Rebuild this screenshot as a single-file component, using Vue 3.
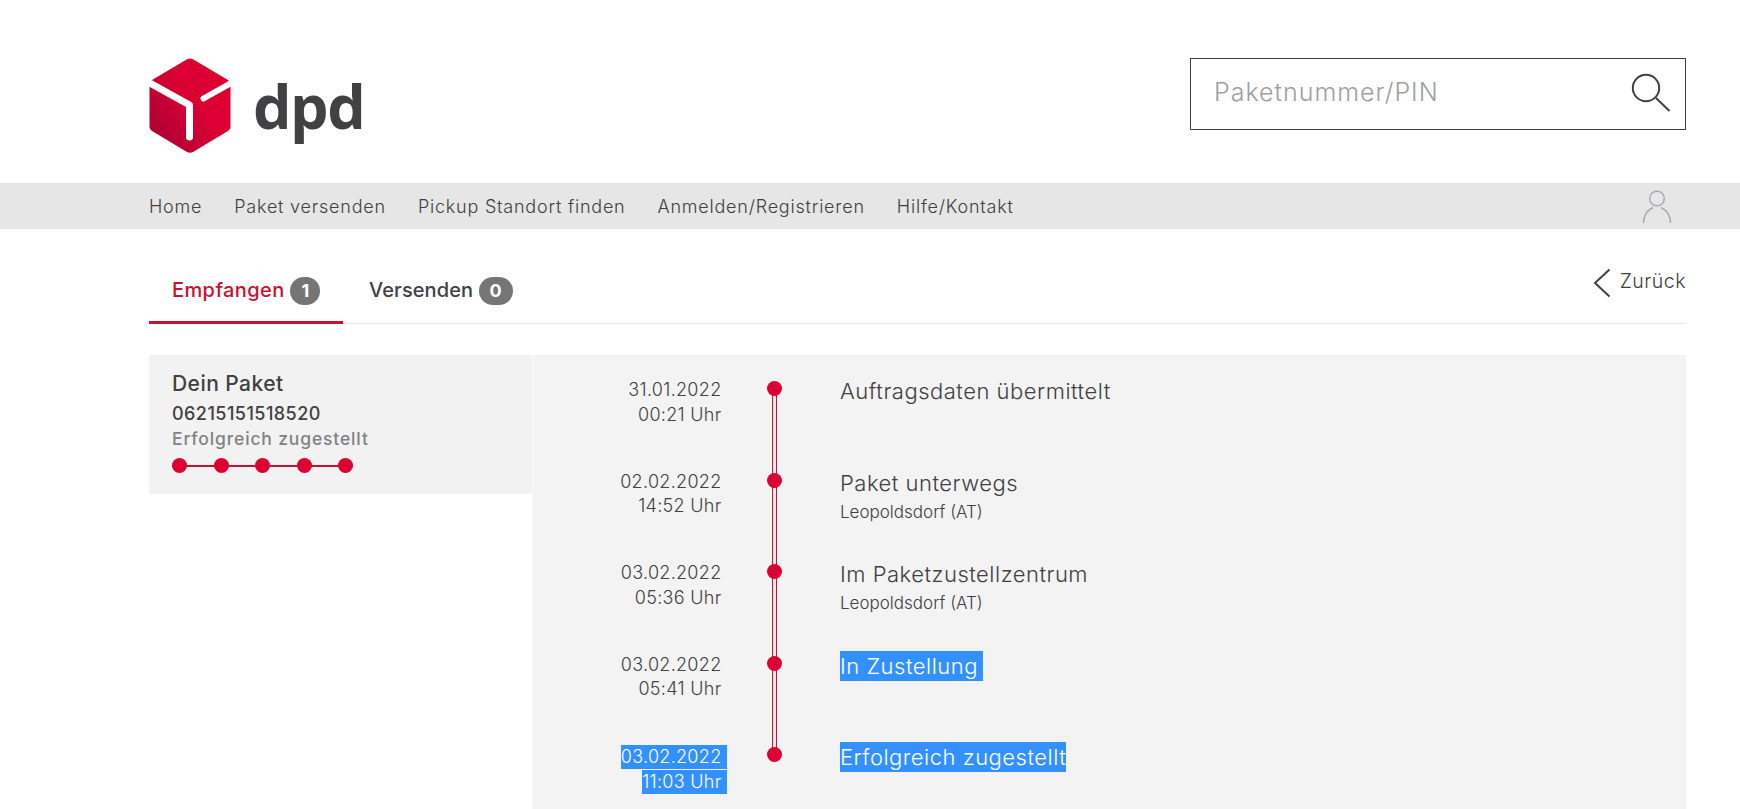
<script setup>
const nav = ['Home', 'Paket versenden', 'Pickup Standort finden', 'Anmelden/Registrieren', 'Hilfe/Kontakt']
const dots = [0, 1, 2, 3, 4]
const events = [
  { date: '31.01.2022', time: '00:21 Uhr', title: 'Auftragsdaten übermittelt' },
  { date: '02.02.2022', time: '14:52 Uhr', title: 'Paket unterwegs', place: 'Leopoldsdorf (AT)' },
  { date: '03.02.2022', time: '05:36 Uhr', title: 'Im Paketzustellzentrum', place: 'Leopoldsdorf (AT)' },
  { date: '03.02.2022', time: '05:41 Uhr', title: 'In Zustellung', titleSel: true },
  { date: '03.02.2022', time: '11:03 Uhr', title: 'Erfolgreich zugestellt', titleSel: true, dateSel: true },
]
</script>

<template>
  <div class="page">
    <header class="top">
      <div class="logo">
        <svg class="cube" width="82" height="96" viewBox="0 0 82 96" aria-hidden="true">
          <defs>
            <linearGradient id="cubeFill" x1="0" y1="0.85" x2="0.55" y2="0.4">
              <stop offset="0" stop-color="#a90034" />
              <stop offset="1" stop-color="#dc0032" />
            </linearGradient>
          </defs>
          <path d="M38 1.2 Q41 -0.4 44 1.2 L79 22 Q81.5 23.6 81.5 26 L81.5 69 Q81.5 71.6 79 73 L44 94 Q41 95.6 38 94 L3 73 Q0.5 71.6 0.5 69 L0.5 26 Q0.5 23.6 3 22 Z" fill="url(#cubeFill)" />
          <path d="M0 24.5 L40.5 47 L40.5 79" fill="none" stroke="#fff" stroke-width="7" stroke-linecap="round" stroke-linejoin="round" />
          <path d="M54.5 40.5 L83 24.5" fill="none" stroke="#fff" stroke-width="6" stroke-linecap="round" />
        </svg>
        <span class="wordmark">dpd</span>
      </div>
      <div class="search">
        <input class="search-input" type="text" placeholder="Paketnummer/PIN" />
        <svg width="40" height="40" viewBox="0 0 40 40" fill="none" stroke="#414042" aria-hidden="true">
          <circle cx="15" cy="15" r="13.2" stroke-width="2" />
          <path d="M25 25 L38.5 38" stroke-width="2" />
        </svg>
      </div>
    </header>

    <nav class="navbar">
      <div class="nav-links">
        <a v-for="item in nav" :key="item">{{ item }}</a>
      </div>
      <svg class="user" width="30" height="34" viewBox="0 0 30 34" fill="none" stroke="#a7a9ac" stroke-width="1.4" aria-hidden="true">
        <circle cx="15" cy="8.5" r="7.3" />
        <path d="M1.5 33 C1.5 23 8 19 11 17.5 M28.5 33 C28.5 23 22 19 19 17.5" />
      </svg>
    </nav>

    <section class="tabs">
      <div class="tab active">Empfangen <span class="badge">1</span></div>
      <div class="tab second">Versenden <span class="badge wide">0</span></div>
      <a class="back">
        <svg width="18" height="30" viewBox="0 0 18 30" fill="none" stroke="#414042" stroke-width="2" aria-hidden="true">
          <path d="M16.5 1.5 L2 15 L16.5 28.5" />
        </svg>
        Zurück
      </a>
    </section>

    <main class="panel">
      <aside class="side">
        <div class="card">
          <h2>Dein Paket</h2>
          <p class="number">06215151518520</p>
          <p class="status">Erfolgreich zugestellt</p>
          <div class="progress">
            <i v-for="d in dots" :key="d"></i>
          </div>
        </div>
      </aside>
      <div class="timeline">
        <div v-for="(e, i) in events" :key="i" class="row">
          <div class="when">
            <span :class="{ sel: e.dateSel }">{{ e.date }}</span>
            <span :class="{ sel: e.dateSel }">{{ e.time }}</span>
          </div>
          <div class="marker" :class="{ last: i === events.length - 1 }"><b></b></div>
          <div class="what">
            <div class="title"><span :class="{ sel: e.titleSel, pad: e.title === 'In Zustellung' }">{{ e.title }}</span></div>
            <div v-if="e.place" class="place">{{ e.place }}</div>
          </div>
        </div>
      </div>
    </main>
  </div>
</template>

<style>
html, body { margin: 0; background: #fff; }
</style>

<style scoped>
.page {
  height: 809px;
  overflow: hidden;
  font-family: Inter, "Open Sans", sans-serif;
  color: #414042;
}
.top {
  height: 183px;
  padding: 58px 54px 0 149px;
  box-sizing: border-box;
  display: flex;
  justify-content: space-between;
  align-items: flex-start;
}
.logo { display: flex; align-items: flex-start; }
.cube { display: block; }
.wordmark {
  margin: 0 0 0 22px;
  font-family: "Open Sans", sans-serif;
  font-weight: 700;
  font-size: 61px;
  line-height: 95px;
  letter-spacing: -1.5px;
  color: #414042;
}
.search {
  width: 496px;
  height: 72px;
  box-sizing: border-box;
  border: 1px solid #414042;
  display: flex;
  align-items: center;
  padding: 0 14px 0 23px;
}
.search svg { flex: none; margin-top: -3px; }
.search-input {
  flex: 1;
  min-width: 0;
  border: 0;
  outline: 0;
  background: none;
  padding: 0;
  margin-top: -5px;
  font: 300 25px Inter, sans-serif;
  letter-spacing: 1px;
  color: #414042;
}
.search-input::placeholder { color: #9d9fa2; opacity: 1; }
.navbar {
  height: 46px;
  background: #e6e6e6;
  padding: 0 54px 0 149px;
  display: flex;
  align-items: center;
  justify-content: space-between;
}
.nav-links { display: flex; gap: 32px; font-size: 18px; font-weight: 300; letter-spacing: 0.78px; }
.user { margin: 2px 14px 0 0; }
.tabs {
  height: 95px;
  margin: 0 54px 0 149px;
  border-bottom: 1px solid #e6e6e6;
  box-sizing: border-box;
  display: flex;
  position: relative;
}
.tab {
  padding: 46px 23px 0;
  margin-bottom: -1px;
  font-size: 20px;
  font-weight: 500;
  line-height: 30px;
  letter-spacing: 0.4px;
  box-sizing: border-box;
  white-space: nowrap;
}
.tab.second { padding-left: 26px; letter-spacing: 0.1px; }
.tab.active {
  color: #c8102e;
  border-bottom: 3px solid #c8102e;
  width: 194px;
}
.badge {
  display: inline-block;
  width: 30px;
  height: 28px;
  line-height: 28px;
  border-radius: 14px;
  background: #757575;
  color: #fff;
  font-weight: 700;
  font-size: 18px;
  letter-spacing: 0;
  text-align: center;
}
.badge.wide { width: 34px; }
.back {
  margin-left: auto;
  display: flex;
  align-items: flex-start;
  gap: 9px;
  padding-top: 39px;
  font-size: 19.5px;
  font-weight: 300;
  line-height: 26px;
  letter-spacing: 0.5px;
}
.panel {
  margin: 31px 54px 0 149px;
  display: flex;
  height: 460px;
}
.side { width: 384px; flex: none; }
.card {
  height: 139px;
  background: #f2f2f2;
  padding: 16px 23px 0;
  box-sizing: border-box;
}
.card h2 { margin: 0; font-size: 21px; font-weight: 500; line-height: 26px; letter-spacing: 0.45px; }
.number { margin: 5px 0 0; font-size: 18px; font-weight: 500; line-height: 24px; letter-spacing: 0.45px; }
.status { margin: 1px 0 0; font-size: 17.5px; font-weight: 500; line-height: 24px; color: #808285; letter-spacing: 0.85px; }
.progress {
  display: flex;
  justify-content: space-between;
  width: 181px;
  margin-top: 7px;
  background: linear-gradient(#c8102e, #c8102e) center / 100% 2px no-repeat;
}
.progress i { width: 15px; height: 15px; border-radius: 50%; background: #dc0032; }
.timeline { flex: 1; background: #f3f3f3; box-shadow: -1px 0 0 #f8f8f8; padding-top: 24px; }
.row {
  height: 91.5px;
  display: grid;
  grid-template-columns: 193.5px 113.5px 1fr;
}
.when {
  display: flex;
  flex-direction: column;
  align-items: flex-end;
  margin-top: -1px;
  font-size: 18px;
  font-weight: 300;
  line-height: 24.5px;
  letter-spacing: 0.3px;
}
.when span { padding-right: 5px; white-space: pre; }
.when .sel { line-height: 24px; margin-top: 1px; }
.marker { position: relative; }
.marker b {
  position: absolute;
  left: 40.5px;
  top: 2px;
  width: 15px;
  height: 15px;
  border-radius: 50%;
  background: #dc0032;
  z-index: 1;
}
.marker::after {
  content: "";
  position: absolute;
  left: 45.5px;
  top: 9px;
  width: 5px;
  height: 91.5px;
  box-sizing: border-box;
  border-left: 1.5px solid #c8103e;
  border-right: 1.5px solid #c8103e;
  background: #f5e6ea;
}
.marker.last::after { display: none; }
.what { margin-top: -3px; }
.title { font-size: 22px; font-weight: 300; line-height: 30px; letter-spacing: 0.5px; }
.place { font-size: 17px; font-weight: 300; line-height: 24px; margin-top: 2px; }
.sel { background: #3390ff; color: #fff; display: inline-block; }
.title .pad { padding-right: 5px; }
</style>
